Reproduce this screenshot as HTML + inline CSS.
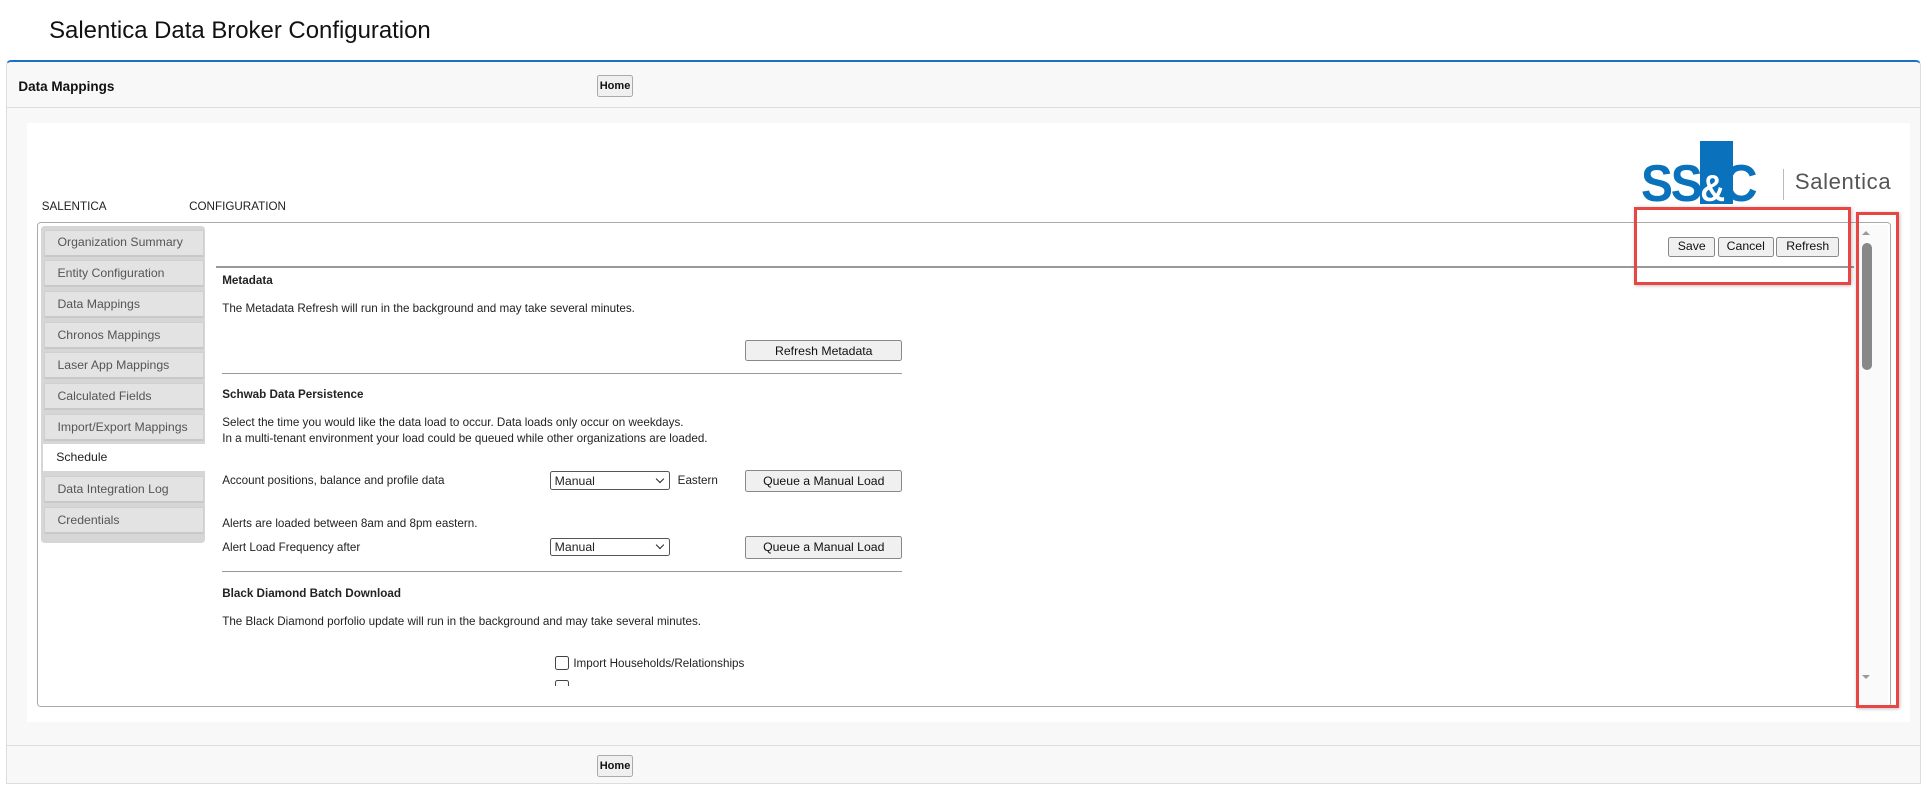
<!DOCTYPE html>
<html><head><meta charset="utf-8"><style>
html,body{margin:0;padding:0;background:#fff;}
body{width:1568px;height:645px;zoom:1.22768;position:relative;overflow:hidden;font-family:"Liberation Sans",Arial,sans-serif;color:#222;}
.a{position:absolute;}
.btn{position:absolute;background:#f0f0f0;border:1px solid #888;border-radius:2px;font-size:10px;text-align:center;box-sizing:border-box;color:#111;}
.t{position:absolute;font-size:9.5px;white-space:nowrap;color:#222;}
.nav{position:absolute;left:36px;width:130px;height:22px;background:#e3e3e3;border:1px solid #d0d0d0;border-bottom:2px solid #c8c8c8;box-sizing:border-box;font-size:10px;color:#555;padding:4px 0 0 10px;}
.sel{position:absolute;left:440px;width:98px;height:15px;border:1px solid #555;border-radius:2px;box-sizing:border-box;font-size:10px;padding:1px 3px;background:#fff;}
.sel:after{content:"";position:absolute;right:5px;top:3px;width:4px;height:4px;border-right:1.5px solid #222;border-bottom:1.5px solid #222;transform:rotate(45deg);}
.hr{position:absolute;height:1px;background:#999;}
</style></head><body>
<div class="a" style="left:40px;top:14px;font-size:19.5px;color:#111;">Salentica Data Broker Configuration</div>
<div class="a" style="left:5px;top:49px;width:1560px;height:590px;border:1px solid #ddd;border-top:2px solid #1f6fc4;border-radius:4px 4px 0 0;background:#f8f8f8;box-sizing:border-box;"></div>
<div class="a" style="left:6px;top:87px;width:1558px;height:1px;background:#ddd;"></div>
<div class="a" style="left:15px;top:64px;font-size:11px;font-weight:bold;color:#111;">Data Mappings</div>
<div class="btn" style="left:486px;top:61px;width:30px;height:18px;font-size:9px;font-weight:bold;padding-top:3px;border-color:#aaa;">Home</div>
<div class="a" style="left:22px;top:100px;width:1534px;height:488px;background:#fff;"></div>
<!-- logo -->
<div class="a" style="left:1385px;top:115px;width:27px;height:51px;background:#0a72bd;"></div>
<div class="a" style="left:1337px;top:126px;font-size:42px;font-weight:bold;color:#0a72bd;letter-spacing:-2px;line-height:46px;transform:scaleX(0.93);transform-origin:left top;">SS<span style="color:#fff;font-size:30px;">&amp;</span>C</div>
<div class="a" style="left:1452px;top:138px;width:1px;height:25px;background:#bbb;"></div>
<div class="a" style="left:1462px;top:138px;font-size:18px;color:#555;letter-spacing:0.5px;">Salentica</div>
<div class="t" style="left:34px;top:163px;">SALENTICA</div>
<div class="t" style="left:154px;top:163px;">CONFIGURATION</div>
<div class="a" style="left:30px;top:181px;width:1510px;height:395px;border:1px solid #aaa;border-radius:3px;box-sizing:border-box;"></div>
<div class="a" style="left:33px;top:184px;width:134px;height:258px;background:#d6d6d6;border-radius:3px;"></div>
<div class="nav" style="top:187px;">Organization Summary</div>
<div class="nav" style="top:212px;">Entity Configuration</div>
<div class="nav" style="top:237px;">Data Mappings</div>
<div class="nav" style="top:262px;">Chronos Mappings</div>
<div class="nav" style="top:287px;">Laser App Mappings</div>
<div class="nav" style="top:312px;">Calculated Fields</div>
<div class="nav" style="top:337px;">Import/Export Mappings</div>
<div class="nav" style="top:362px;left:35px;width:132px;background:#fff;color:#222;border-color:#fff;">Schedule</div>
<div class="nav" style="top:388px;">Data Integration Log</div>
<div class="nav" style="top:413px;">Credentials</div>
<!-- top buttons -->
<div class="btn" style="left:1359px;top:193px;width:38px;height:16px;padding-top:1px;">Save</div>
<div class="btn" style="left:1399px;top:193px;width:46px;height:16px;padding-top:1px;">Cancel</div>
<div class="btn" style="left:1447px;top:193px;width:51px;height:16px;padding-top:1px;">Refresh</div>
<div class="hr" style="left:176px;top:217px;width:1334px;"></div>
<div class="t" style="left:181px;top:223px;font-weight:bold;">Metadata</div>
<div class="t" style="left:181px;top:246px;">The Metadata Refresh will run in the background and may take several minutes.</div>
<div class="btn" style="left:607px;top:277px;width:128px;height:17px;padding-top:2px;">Refresh Metadata</div>
<div class="hr" style="left:181px;top:304px;width:554px;"></div>
<div class="t" style="left:181px;top:316px;font-weight:bold;">Schwab Data Persistence</div>
<div class="t" style="left:181px;top:339px;">Select the time you would like the data load to occur. Data loads only occur on weekdays.</div>
<div class="t" style="left:181px;top:352px;">In a multi-tenant environment your load could be queued while other organizations are loaded.</div>
<div class="t" style="left:181px;top:386px;">Account positions, balance and profile data</div>
<div class="sel" style="left:448px;top:384px;">Manual</div>
<div class="t" style="left:552px;top:386px;">Eastern</div>
<div class="btn" style="left:607px;top:383px;width:128px;height:18px;padding-top:2px;">Queue a Manual Load</div>
<div class="t" style="left:181px;top:421px;">Alerts are loaded between 8am and 8pm eastern.</div>
<div class="t" style="left:181px;top:441px;">Alert Load Frequency after</div>
<div class="sel" style="left:448px;top:438px;">Manual</div>
<div class="btn" style="left:607px;top:437px;width:128px;height:18px;padding-top:2px;">Queue a Manual Load</div>
<div class="hr" style="left:181px;top:465px;width:554px;"></div>
<div class="t" style="left:181px;top:478px;font-weight:bold;">Black Diamond Batch Download</div>
<div class="t" style="left:181px;top:501px;">The Black Diamond porfolio update will run in the background and may take several minutes.</div>
<div class="a" style="left:452px;top:534px;width:10px;height:10px;border:1px solid #444;border-radius:2px;"></div>
<div class="t" style="left:467px;top:535px;">Import Households/Relationships</div>
<div class="a" style="left:452px;top:554px;width:10px;height:4px;border:1px solid #444;border-bottom:none;border-radius:2px 2px 0 0;"></div>
<!-- scrollbar -->
<div class="a" style="left:1513px;top:183px;width:25px;height:391px;background:#fafafa;"></div>
<div class="a" style="left:1517px;top:188px;width:0;height:0;border-left:4px solid transparent;border-right:4px solid transparent;border-bottom:4px solid #999;"></div>
<div class="a" style="left:1517px;top:198px;width:8px;height:103px;background:#888;border-radius:4px;"></div>
<div class="a" style="left:1517px;top:550px;width:0;height:0;border-left:4px solid transparent;border-right:4px solid transparent;border-top:4px solid #999;"></div>
<!-- red highlight boxes -->
<div class="a" style="left:1331px;top:169px;width:177px;height:63px;border:2.5px solid #e84545;box-sizing:border-box;box-shadow:1px 1px 3px rgba(0,0,0,.3);"></div>
<div class="a" style="left:1512px;top:173px;width:35px;height:404px;border:2.5px solid #e84545;box-sizing:border-box;box-shadow:1px 1px 3px rgba(0,0,0,.3);"></div>
<!-- footer -->
<div class="a" style="left:6px;top:607px;width:1558px;height:1px;background:#ddd;"></div>
<div class="btn" style="left:486px;top:615px;width:30px;height:18px;font-size:9px;font-weight:bold;padding-top:3px;border-color:#aaa;">Home</div>
</body></html>
